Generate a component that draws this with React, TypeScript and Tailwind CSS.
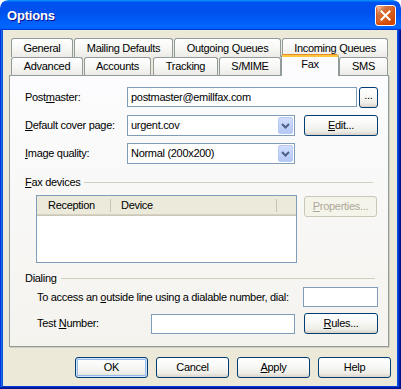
import React from "react";

const FONT = "font-['Liberation_Sans',Arial,sans-serif] text-[11px] tracking-[-0.3px] leading-[13px] text-black";

const BTN =
  "h-[21px] rounded-[3px] border border-[#003C74] bg-[linear-gradient(180deg,#FFFFFF_0%,#F9F9F7_40%,#EEEDE7_80%,#D8D3C8_100%)] flex items-center justify-center shrink-0";

function Tab({ label, cls }: { label: string; cls: string }) {
  return (
    <div
      className={`h-full ${cls} shrink-0 rounded-t-[3px] border border-b-0 border-[#919B9C] bg-[linear-gradient(180deg,#FFFFFF_0%,#F7F7F5_50%,#ECEBE6_100%)] flex items-center justify-center`}
    >
      {label}
    </div>
  );
}

function Chevron() {
  return (
    <svg width="9" height="6" viewBox="0 0 9 6">
      <path d="M1 1 L4.5 4.5 L8 1" fill="none" stroke="#4D6185" strokeWidth="2" />
    </svg>
  );
}

function Combo({ value }: { value: string }) {
  return (
    <div className="w-[168px] h-[21px] shrink-0 border border-[#7F9DB9] bg-white flex items-stretch">
      <div className="flex-1 pl-[3px] flex items-center">{value}</div>
      <div className="w-[15px] m-[1px] rounded-[2px] border border-[#B9CBF3] bg-[linear-gradient(180deg,#D2DEFC_0%,#C1D3FB_50%,#B4C8F7_100%)] flex items-center justify-center">
        <Chevron />
      </div>
    </div>
  );
}

function GroupHeader({ label, mt, mr }: { label: React.ReactNode; mt: string; mr: string }) {
  return (
    <div className={`${mt} h-[13px] flex items-center`}>
      <span className="shrink-0">{label}</span>
      <div className={`flex-1 ml-[4px] ${mr} h-px bg-[#D0D0BF]`} />
    </div>
  );
}

export default function App() {
  return (
    <div className={`w-[401px] h-[389px] flex flex-col rounded-t-[8px] overflow-hidden ${FONT}`}>
      {/* Title bar */}
      <div className="h-[30px] shrink-0 flex items-center justify-between pl-[7px] pr-[5px] rounded-t-[8px] bg-[linear-gradient(180deg,#0997FF_0%,#0053EE_8%,#0050EE_40%,#0066FF_88%,#0066FF_93%,#005BFF_95%,#003DD7_96%,#003DD7_100%)]">
        <span className="text-white font-bold text-[13px] tracking-[-0.2px] [text-shadow:1px_1px_#0F1089]">
          Options
        </span>
        <div className="w-[21px] h-[21px] rounded-[3px] border border-white bg-[radial-gradient(circle_at_90%_90%,#CC4600_0%,#DC6527_55%,#CD7546_70%,#FFCCB2_90%,#FFFFFF_100%)] shadow-[inset_0_-1px_2px_1px_#DA4600] flex items-center justify-center">
          <svg width="11" height="11" viewBox="0 0 11 11">
            <path d="M1.5 1.5 L9.5 9.5 M9.5 1.5 L1.5 9.5" stroke="white" strokeWidth="2" strokeLinecap="square" />
          </svg>
        </div>
      </div>

      {/* Frame */}
      <div className="flex-1 flex pl-[3px] pr-[4px] pb-[3px] bg-[#0855DD] shadow-[inset_-1px_-1px_#00138C,inset_1px_0_#0831D9,inset_-2px_-2px_#001EA0,inset_2px_0_#166AEE,inset_-3px_-3px_#003BDA]">
        <div className="flex-1 bg-[#ECE9D8] flex flex-col pt-[8px]">
          {/* Tabs row 1 */}
          <div className="ml-[8px] h-[19px] flex">
            <Tab label="General" cls="w-[62px]" />
            <Tab label="Mailing Defaults" cls="ml-px w-[99px]" />
            <Tab label="Outgoing Queues" cls="ml-px w-[107px]" />
            <Tab label="Incoming Queues" cls="ml-px w-[106px]" />
          </div>
          {/* Tabs row 2 */}
          <div className="ml-[8px] h-[18px] flex items-end">
            <Tab label="Advanced" cls="w-[72px]" />
            <Tab label="Accounts" cls="ml-px w-[67px]" />
            <Tab label="Tracking" cls="ml-[2px] w-[65px]" />
            <Tab label="S/MIME" cls="ml-px w-[62px]" />
            <div className="relative z-10 -mb-px h-[22px] w-[58px] shrink-0 rounded-t-[3px] border border-b-0 border-[#919B9C] border-t-[#E68B2C] bg-[#FCFCFE] flex flex-col items-center">
              <div className="h-[2px] w-full bg-[#FFC73C]" />
              <div className="pt-[1px]">Fax</div>
            </div>
            <Tab label="SMS" cls="w-[49px]" />
          </div>

          {/* Panel */}
          <div className="ml-[6px] w-[380px] h-[272px] shrink-0 border border-[#919B9C] bg-[linear-gradient(180deg,#FCFCFE_0%,#F4F3EE_100%)] shadow-[1px_1px_0_#D0CEBF] flex flex-col pl-[15px] pr-[10px] pt-[11px]">
            <div className="h-[20px] flex items-center">
              <div className="w-[102px] shrink-0">
                Post<u>m</u>aster:
              </div>
              <div className="w-[230px] h-[20px] shrink-0 border border-[#7F9DB9] bg-white pl-[3px] flex items-center">
                postmaster@emillfax.com
              </div>
              <div className={`${BTN} ml-[2px] w-[19px] h-[19px] pb-[3px]`}>...</div>
            </div>

            <div className="mt-[8px] flex items-center">
              <div className="w-[102px] shrink-0">
                <u>D</u>efault cover page:
              </div>
              <Combo value="urgent.cov" />
              <div className={`${BTN} ml-[9px] w-[74px]`}>
                <span>
                  <u>E</u>dit...
                </span>
              </div>
            </div>

            <div className="mt-[7px] flex items-center">
              <div className="w-[102px] shrink-0">
                <u>I</u>mage quality:
              </div>
              <Combo value="Normal (200x200)" />
            </div>

            <GroupHeader
              mt="mt-[12px]"
              mr="mr-[5px]"
              label={
                <>
                  <u>F</u>ax devices
                </>
              }
            />

            <div className="mt-[6px] flex items-start">
              <div className="ml-[11px] w-[261px] h-[68px] shrink-0 border border-[#7F9DB9] bg-white flex flex-col">
                <div className="h-[18px] bg-[#EBEADB] flex items-center">
                  <div className="w-[73px] pl-[11px] pt-[1px]">Reception</div>
                  <div className="w-px h-[13px] bg-[#C7C5B2]" />
                  <div className="w-[165px] pl-[10px] pt-[1px]">Device</div>
                  <div className="w-px h-[13px] bg-[#C7C5B2]" />
                </div>
                <div className="h-px bg-[#D6D2C2]" />
                <div className="h-px bg-[#CBC7B8]" />
              </div>
              <div className="ml-[7px] mt-px h-[21px] w-[73px] rounded-[3px] border border-[#C9C7BA] bg-[#F5F4EA] text-[#ACA899] flex items-center justify-center">
                <span>
                  <u>P</u>roperties...
                </span>
              </div>
            </div>

            <GroupHeader mt="mt-[9px]" mr="mr-[3px]" label="Dialing" />

            <div className="mt-[2px] h-[20px] pl-[12px] flex items-center">
              <div className="flex-1">
                To access an <u>o</u>utside line using a dialable number, dial:
              </div>
              <div className="w-[75px] h-[20px] shrink-0 border border-[#7F9DB9] bg-white" />
            </div>

            <div className="mt-[6px] h-[21px] pl-[12px] flex items-center">
              <div className="w-[114px] shrink-0">
                Test <u>N</u>umber:
              </div>
              <div className="w-[144px] h-[20px] shrink-0 border border-[#7F9DB9] bg-white" />
              <div className={`${BTN} ml-[9px] w-[74px]`}>
                <span>
                  <u>R</u>ules...
                </span>
              </div>
            </div>
          </div>

          {/* Bottom buttons */}
          <div className="mt-[10px] pr-[6px] flex justify-end gap-[8px]">
            <div className={`${BTN} w-[73px] shadow-[inset_0_0_0_1px_#CEE7FF,inset_0_0_0_2px_#98B8EA]`}>OK</div>
            <div className={`${BTN} w-[73px]`}>Cancel</div>
            <div className={`${BTN} w-[73px]`}>
              <span>
                <u>A</u>pply
              </span>
            </div>
            <div className={`${BTN} w-[73px]`}>Help</div>
          </div>
        </div>
      </div>
    </div>
  );
}
